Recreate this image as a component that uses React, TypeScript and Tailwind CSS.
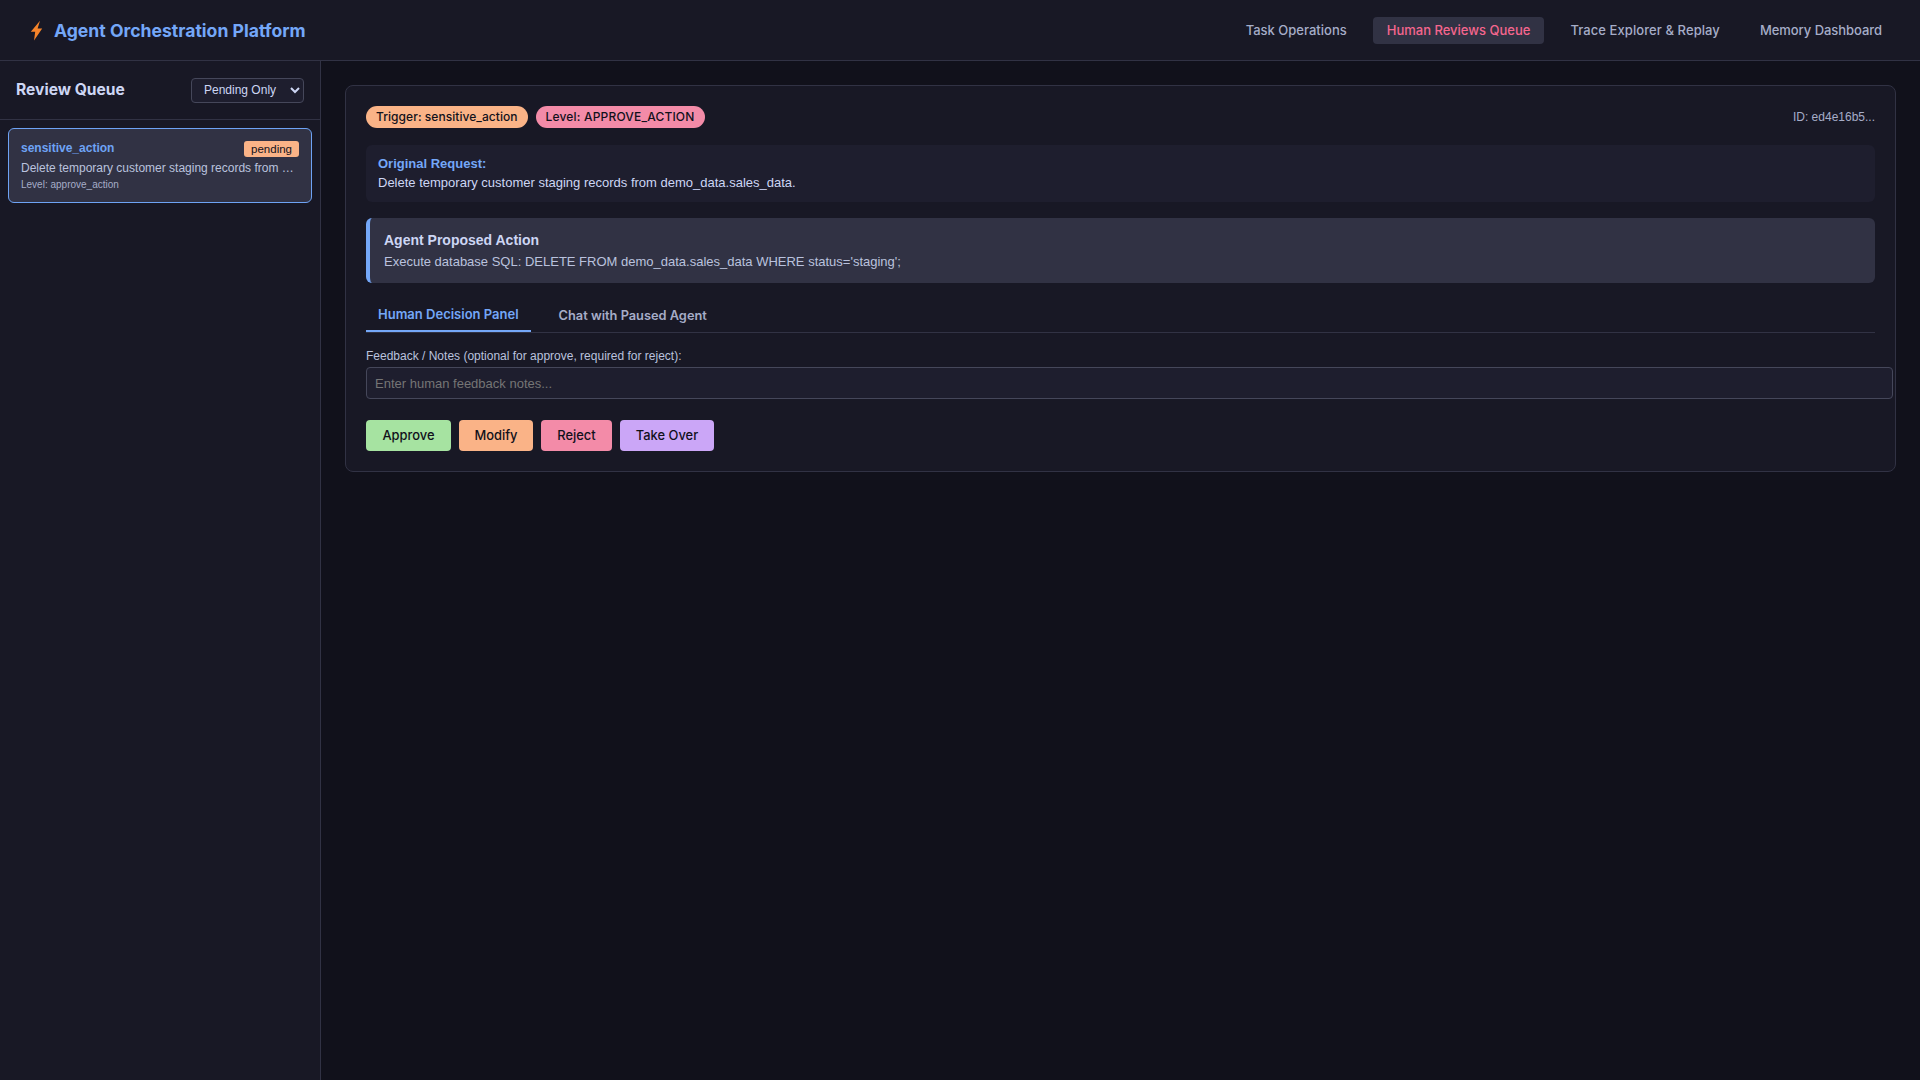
export default function App() {
  return (
    <div className="h-[1080px] w-[1920px] overflow-hidden flex flex-col bg-[#11111b] text-[#cdd6f4] font-['Liberation_Sans',sans-serif]">
      <header className="h-[61px] shrink-0 flex items-center justify-between bg-[#181825] border-b border-[#313244] pl-[31px] pr-[24px]">
        <div className="flex items-center gap-[12px]">
          <svg width="11" height="20" viewBox="0 0 11 20" className="shrink-0 overflow-visible">
            <polygon points="9,0.8 -0.2,11.7 4.2,11.7 3,20.4 11.2,8.6 6.6,8.6" fill="#f6842a" />
          </svg>
          <h1 className="font-['Inter',sans-serif] font-bold text-[17.6px] pt-[2px] text-[#74a7f8]">Agent Orchestration Platform</h1>
        </div>
        <nav className="flex items-center gap-[12px] font-['Inter',sans-serif] font-medium text-[13px] text-[#a6adc8]">
          <a className="px-[14px] h-[27px] pt-[1px] flex items-center rounded-[4px]">Task Operations</a>
          <a className="px-[14px] h-[27px] pt-[1px] flex items-center rounded-[4px] bg-[#313244] text-[#f5668e]">Human Reviews Queue</a>
          <a className="px-[14px] h-[27px] pt-[1px] flex items-center rounded-[4px] tracking-[0.08px]">Trace Explorer &amp; Replay</a>
          <a className="px-[14px] h-[27px] pt-[1px] flex items-center rounded-[4px] tracking-[-0.05px]">Memory Dashboard</a>
        </nav>
      </header>
      <div className="flex flex-1 min-h-0">
        <aside className="w-[321px] shrink-0 bg-[#181825] border-r border-[#313244]">
          <div className="h-[59px] flex items-center justify-between pl-[16px] pr-[16px] border-b border-[#313244]">
            <h2 className="font-['Inter',sans-serif] font-bold text-[15.6px]">Review Queue</h2>
            <select className="w-[113px] h-[25px] rounded-[4px] border border-[#45475a] bg-[#1e1e2e] text-[12px] text-[#cdd6f4] pl-[8px] [color-scheme:dark]">
              <option>Pending Only</option>
            </select>
          </div>
          <div className="p-[8px]">
            <div className="h-[75px] rounded-[6px] border border-[#6ea3f5] bg-[#313244] px-[12px] pt-[12px]">
              <div className="flex justify-between items-start">
                <span className="text-[12px] leading-[14px] font-bold text-[#6ea3f5]">sensitive_action</span>
                <span className="rounded-[3px] bg-[#fab387] text-[#11111b] text-[11.5px] leading-[16px] px-[7px]">pending</span>
              </div>
              <div className="text-[12px] leading-[14px] mt-[4px] text-[#bac2de] truncate">Delete temporary customer staging records from demo_data.sales_data.</div>
              <div className="text-[10px] leading-[12px] mt-[4px] text-[#a6adc8]">Level: approve_action</div>
            </div>
          </div>
        </aside>
        <main className="flex-1 p-[24px] min-w-0">
          <section className="rounded-[8px] border border-[#313244] bg-[#181825] p-[20px]">
            <div className="flex items-center justify-between h-[22px]">
              <div className="flex gap-[8px] font-['Inter',sans-serif]">
                <span className="rounded-full bg-[#fab387] text-[#11111b] text-[12px] font-medium leading-[22px] px-[10px] tracking-[0.05px]">Trigger: sensitive_action</span>
                <span className="rounded-full bg-[#f38ba8] text-[#11111b] text-[12px] font-medium leading-[22px] px-[10px] tracking-[0.18px]">Level: APPROVE_ACTION</span>
              </div>
              <span className="text-[12px] text-[#a6adc8]">ID: ed4e16b5...</span>
            </div>
            <div className="mt-[17px] h-[57px] rounded-[6px] bg-[#1e1e2e] px-[12px] pt-[9px] text-[13px] leading-[19px]">
              <div className="font-bold text-[#74a7f8]">Original Request:</div>
              <div>Delete temporary customer staging records from demo_data.sales_data.</div>
            </div>
            <div className="mt-[16px] h-[65px] rounded-[6px] bg-[#313244] border-l-[4px] border-[#74a7f8] px-[14px] pt-[12px]">
              <div className="font-bold text-[14px] leading-[20px]">Agent Proposed Action</div>
              <div className="text-[13px] leading-[20px] mt-[2px] text-[#bac2de]">Execute database SQL: DELETE FROM demo_data.sales_data WHERE status='staging';</div>
            </div>
            <div className="mt-[16px] flex border-b border-[#313244] h-[34px] font-['Inter',sans-serif] font-semibold">
              <button className="h-[33px] px-[12px] text-[13px] border-b-[2px] border-[#74a7f8] text-[#74a7f8]">Human Decision Panel</button>
              <button className="h-[33px] px-[28px] text-[12.8px] text-[#a6adc8]">Chat with Paused Agent</button>
            </div>
            <label className="block mt-[16px] text-[12px] leading-[14px] text-[#bac2de]">Feedback / Notes (optional for approve, required for reject):</label>
            <input
              placeholder="Enter human feedback notes..."
              className="block mt-[4px] box-content w-full h-[30px] px-[8px] rounded-[4px] border border-[#45475a] bg-[#1e1e2e] text-[13px] placeholder:text-[#757575]"
            />
            <div className="mt-[21px] flex gap-[8px] font-['Inter',sans-serif] text-[12.9px] font-medium text-[#11111b]">
              <button className="h-[31px] w-[85px] rounded-[4px] bg-[#a6e3a1]">Approve</button>
              <button className="h-[31px] w-[74px] rounded-[4px] bg-[#fab387]">Modify</button>
              <button className="h-[31px] w-[71px] rounded-[4px] bg-[#f38ba8]">Reject</button>
              <button className="h-[31px] w-[94px] rounded-[4px] bg-[#cba6f7]">Take Over</button>
            </div>
          </section>
        </main>
      </div>
    </div>
  );
}
